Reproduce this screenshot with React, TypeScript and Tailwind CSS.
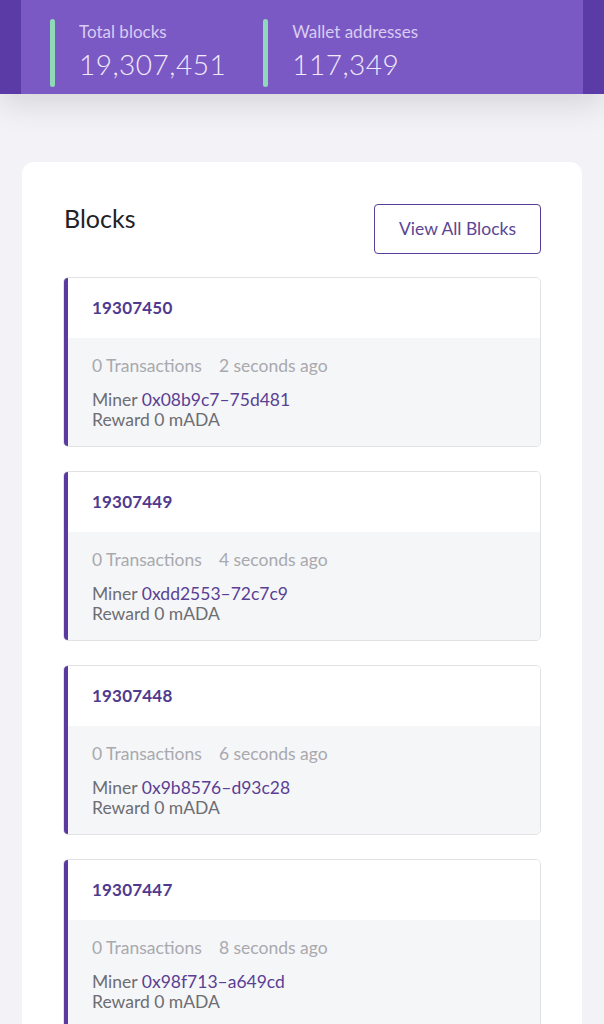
import { Fragment } from 'react';

interface Block {
  height: number;
  ago: string;
  miner: string;
}

const blocks: Block[] = [
  { height: 19307450, ago: '2 seconds ago', miner: '0x08b9c7–75d481' },
  { height: 19307449, ago: '4 seconds ago', miner: '0xdd2553–72c7c9' },
  { height: 19307448, ago: '6 seconds ago', miner: '0x9b8576–d93c28' },
  { height: 19307447, ago: '8 seconds ago', miner: '0x98f713–a649cd' },
];

const stats = [
  { label: 'Total blocks', value: '19,307,451' },
  { label: 'Wallet addresses', value: '117,349' },
];

function StatItem({ label, value }: { label: string; value: string }) {
  return (
    <div className="flex gap-[24px]">
      <div className="w-[5px] h-[68px] rounded-full bg-[#8fd8b8]" />
      <div className="flex flex-col pt-[2px]">
        <span className="text-[17px] leading-[22px] text-[#d9ccf3]">{label}</span>
        <span className="text-[28px] leading-[42px] font-light text-[#f1ebfc] tracking-[0.5px]">{value}</span>
      </div>
    </div>
  );
}

function BlockCard({ block }: { block: Block }) {
  return (
    <div className="flex rounded-[5px] border border-[#e2e2e6] overflow-hidden">
      <div className="w-[4px] bg-[#5b3a9f] shrink-0" />
      <div className="flex-1 flex flex-col">
        {/* Header */}
        <div className="h-[60px] bg-white flex items-center pl-[24px]">
          <span className="text-[17px] font-bold text-[#4f3a8e] tracking-[0.2px]">{block.height}</span>
        </div>
        {/* Details */}
        <div className="h-[108px] bg-[#f5f6f8] pl-[24px] pt-[16px]">
          <div className="flex gap-[17px] text-[17.5px] leading-[24px] text-[#a9a9ae]">
            <span>0 Transactions</span>
            <span>{block.ago}</span>
          </div>
          <div className="mt-[12px] text-[17.5px] leading-[20px] text-[#6d6d72]">
            <div>
              Miner <span className="text-[#5a3f94]">{block.miner}</span>
            </div>
            <div>Reward 0 mADA</div>
          </div>
        </div>
      </div>
    </div>
  );
}

export default function App() {
  return (
    <div className="min-h-screen bg-[#f3f3f7] font-['Lato','Noto_Sans',sans-serif] overflow-hidden">
      {/* Top stats bar */}
      <div className="bg-[#5b3ba6] shadow-[0_10px_30px_rgba(0,0,0,0.12)]">
        <div className="mx-[21px] h-[94px] bg-[#7b59c4] flex items-start pt-[19px] pl-[29px] gap-[37px]">
          {stats.map((s) => (
            <Fragment key={s.label}>
              <StatItem label={s.label} value={s.value} />
            </Fragment>
          ))}
        </div>
      </div>

      {/* Blocks panel */}
      <div className="mx-[22px] mt-[68px] bg-white rounded-[12px] px-[41px] pt-[42px] pb-[40px]">
        <div className="flex items-start justify-between">
          <h2 className="text-[25px] leading-[28px] text-[#222226] pl-[1px]">Blocks</h2>
          <button className="h-[50px] px-[24px] border-[1.5px] border-[#5a3d99] rounded-[4px] text-[17.5px] text-[#5b4594] bg-white">
            View All Blocks
          </button>
        </div>
        <div className="mt-[23px] flex flex-col gap-[24px]">
          {blocks.map((b) => (
            <BlockCard key={b.height} block={b} />
          ))}
        </div>
      </div>
    </div>
  );
}
